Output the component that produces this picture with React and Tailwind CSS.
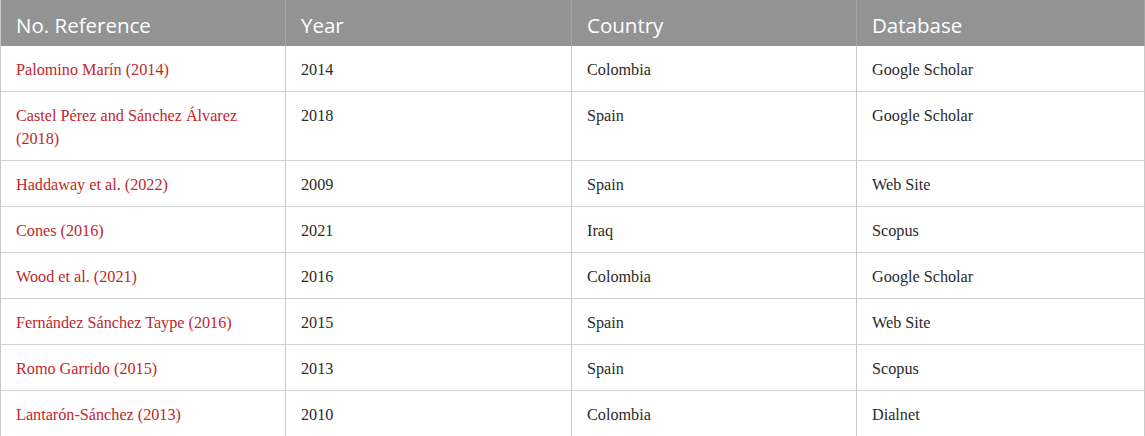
import React from 'react';

const rows = [
  { ref: 'Palomino Marín (2014)', year: '2014', country: 'Colombia', db: 'Google Scholar' },
  { ref: 'Castel Pérez and Sánchez Álvarez (2018)', year: '2018', country: 'Spain', db: 'Google Scholar' },
  { ref: 'Haddaway et al. (2022)', year: '2009', country: 'Spain', db: 'Web Site' },
  { ref: 'Cones (2016)', year: '2021', country: 'Iraq', db: 'Scopus' },
  { ref: 'Wood et al. (2021)', year: '2016', country: 'Colombia', db: 'Google Scholar' },
  { ref: 'Fernández Sánchez Taype (2016)', year: '2015', country: 'Spain', db: 'Web Site' },
  { ref: 'Romo Garrido (2015)', year: '2013', country: 'Spain', db: 'Scopus' },
  { ref: 'Lantarón-Sánchez (2013)', year: '2010', country: 'Colombia', db: 'Dialnet' },
];

const headers = ['No. Reference', 'Year', 'Country', 'Database'];

const App = () => {
  return (
    <div className="w-[1145px] bg-white">
      <table className="w-full table-fixed border-collapse">
        <colgroup>
          <col className="w-[285px]" />
          <col className="w-[286px]" />
          <col className="w-[285px]" />
          <col />
        </colgroup>
        <thead>
          <tr className="bg-[#939393]">
            {headers.map(h => (
              <th
                key={h}
                className="h-[46px] px-[15px] pt-[3px] text-left align-middle font-normal text-white text-[20.5px] leading-[24px] border-x border-[#a3a3a3] first:border-l-[#c8c8c8]"
                style={{ fontFamily: '"Open Sans", sans-serif' }}
              >
                {h}
              </th>
            ))}
          </tr>
        </thead>
        <tbody style={{ fontFamily: '"Liberation Serif", serif' }}>
          {rows.map((r, i) => (
            <tr key={i} className="border-b border-[#d3d3d3]">
              <td className="px-[15px] pt-[13px] pb-[9px] align-top text-[16.2px] leading-[23px] text-[#c1272d] border-x border-[#c9c9c9]">
                {r.ref}
              </td>
              <td className="px-[15px] pt-[13px] pb-[9px] align-top text-[16.2px] leading-[23px] text-[#2b2b2b] border-x border-[#c9c9c9]">
                {r.year}
              </td>
              <td className="px-[15px] pt-[13px] pb-[9px] align-top text-[16.2px] leading-[23px] text-[#2b2b2b] border-x border-[#c9c9c9]">
                {r.country}
              </td>
              <td className="px-[15px] pt-[13px] pb-[9px] align-top text-[16.2px] leading-[23px] text-[#2b2b2b] border-x border-[#c9c9c9]">
                {r.db}
              </td>
            </tr>
          ))}
        </tbody>
      </table>
    </div>
  );
};

export default App;
